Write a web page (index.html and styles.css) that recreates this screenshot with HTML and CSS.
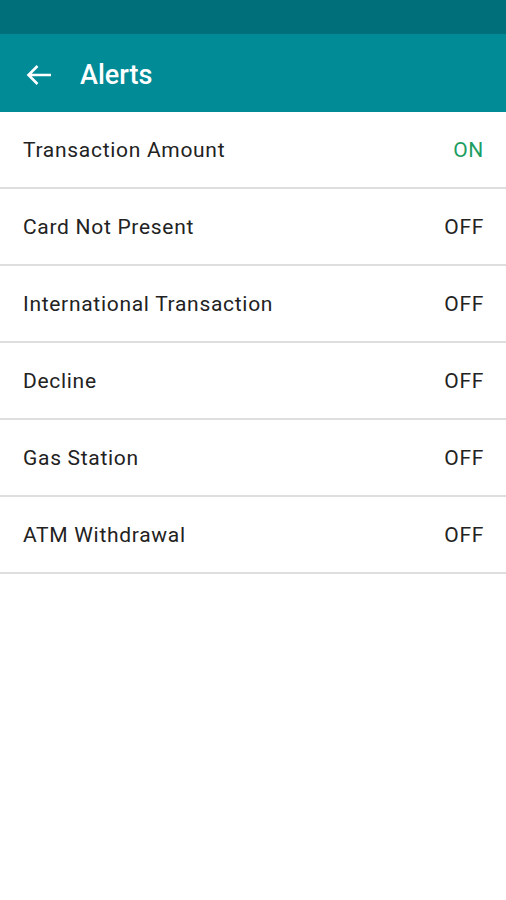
FILE: index.html
```html
<!DOCTYPE html>
<html lang="en">
<head>
    <meta charset="UTF-8">
    <meta name="viewport" content="width=device-width, initial-scale=1.0">
    <title>Alerts</title>
    <link rel="stylesheet" href="styles.css">
</head>
<body>

    <!-- Barre d'état -->
    <div class="status-bar"></div>

    <!-- Barre d'application -->
    <header class="app-bar">
        <svg class="back-icon" viewBox="0 0 26 22" width="26" height="22">
            <path d="M25 11H2.5M11.5 2L2.5 11l9 9" fill="none" stroke="#fff" stroke-width="2.6"/>
        </svg>
        <h1>Alerts</h1>
    </header>

    <!-- Liste des alertes -->
    <ul class="alert-list">
        <li class="alert-row"><span>Transaction Amount</span><span class="state on">ON</span></li>
        <li class="alert-row"><span>Card Not Present</span><span class="state">OFF</span></li>
        <li class="alert-row"><span>International Transaction</span><span class="state">OFF</span></li>
        <li class="alert-row"><span>Decline</span><span class="state">OFF</span></li>
        <li class="alert-row"><span>Gas Station</span><span class="state">OFF</span></li>
        <li class="alert-row"><span>ATM Withdrawal</span><span class="state">OFF</span></li>
    </ul>

</body>
</html>
```

FILE: styles.css
```css
/* Style de la page */
body {
    font-family: Roboto, "Noto Sans", sans-serif;
    background-color: #fff;
    margin: 0;
    padding: 0;
}

.status-bar {
    height: 34px;
    background-color: #006f7a;
}

.app-bar {
    height: 78px;
    box-sizing: border-box;
    padding: 3px 0 0 26px;
    background-color: #008b97;
    display: flex;
    align-items: center;
    gap: 28px;
}

.back-icon {
    display: block;
}

.app-bar h1 {
    margin: 0;
    color: #fff;
    font-size: 27px;
    font-weight: 500;
}

/* Liste */
.alert-list {
    list-style: none;
    margin: 0;
    padding: 0;
}

.alert-row {
    height: 75px;
    display: flex;
    justify-content: space-between;
    align-items: center;
    padding: 1px 22px 0 23px;
    box-sizing: border-box;
    height: 77px;
    border-bottom: 2px solid #dedede;
    font-size: 21px;
    letter-spacing: 0.7px;
    color: #222;
}

.state {
    color: #222;
}

.state.on {
    color: #1e9e62;
}
```
